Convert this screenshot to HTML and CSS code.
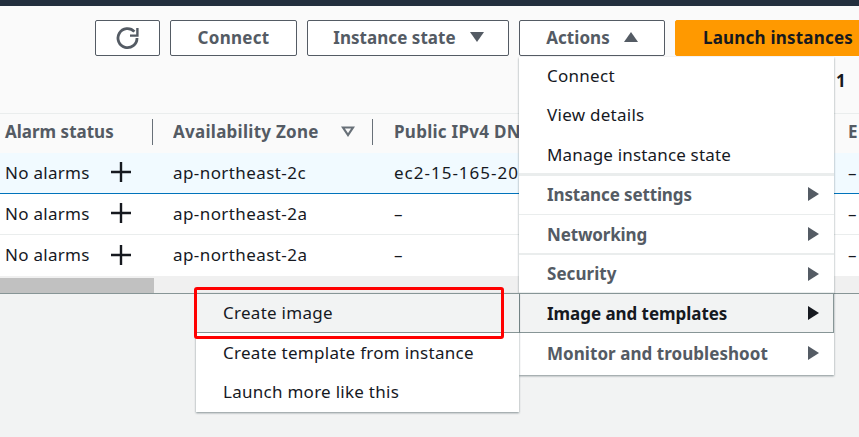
FILE: index.html
```html
<!DOCTYPE html>
<html>
<head>
    <meta charset="UTF-8">
    <title>Instances</title>
    <link rel="stylesheet" href="styles.css">
</head>
<body>
    <div class="topbar"></div>
    <div class="panel">
        <div class="toolbar">
            <button class="btn btn-refresh" aria-label="Refresh">
                <svg width="24" height="24" viewBox="0 0 24 24" fill="none" stroke="#545b64" stroke-width="2.8">
                    <path d="M18.4 5.6A9.5 9.5 0 1 0 21 12"/>
                    <path d="M21.4 2v7.6h-7.4" stroke-width="2.4"/>
                </svg>
            </button>
            <button class="btn btn-connect">Connect</button>
            <button class="btn btn-state">Instance state <span class="tri-down"></span></button>
            <button class="btn btn-actions">Actions <span class="tri-up"></span></button>
            <button class="btn btn-launch">Launch instances</button>
        </div>
        <div class="pager">1</div>
    </div>

    <div class="table">
        <div class="row row-head">
            <div class="cell cell-alarm">Alarm status<span class="sep sep-alarm"></span></div>
            <div class="cell">Availability Zone
                <svg class="sort" width="14" height="11" viewBox="0 0 14 11" fill="none" stroke="#687078" stroke-width="2.2"><path d="M2 1.5h10L7 9z"/></svg>
                <span class="sep sep-zone"></span>
            </div>
            <div class="cell">Public IPv4 DNS</div>
            <div class="cell">E</div>
        </div>
        <div class="row row-selected">
            <div class="cell">No alarms<svg class="plus" width="20" height="20" viewBox="0 0 20 20"><path d="M0 10h20M10 0v20" stroke="#16191f" stroke-width="2.4"/></svg></div>
            <div class="cell cell-zone">ap-northeast-2c</div>
            <div class="cell cell-dns">ec2-15-165-20</div>
            <div class="cell">–</div>
        </div>
        <div class="row">
            <div class="cell">No alarms<svg class="plus" width="20" height="20" viewBox="0 0 20 20"><path d="M0 10h20M10 0v20" stroke="#16191f" stroke-width="2.4"/></svg></div>
            <div class="cell cell-zone">ap-northeast-2a</div>
            <div class="cell">–</div>
            <div class="cell">–</div>
        </div>
        <div class="row row-last">
            <div class="cell">No alarms<svg class="plus" width="20" height="20" viewBox="0 0 20 20"><path d="M0 10h20M10 0v20" stroke="#16191f" stroke-width="2.4"/></svg></div>
            <div class="cell cell-zone">ap-northeast-2a</div>
            <div class="cell">–</div>
            <div class="cell">–</div>
        </div>
        <div class="scrollbar"><div class="thumb"></div></div>
    </div>
    <div class="footer"></div>

    <!-- menu Actions -->
    <ul class="menu menu-actions">
        <li class="item">Connect</li>
        <li class="item">View details</li>
        <li class="item item-end">Manage instance state</li>
        <li class="item group group-instance">Instance settings<span class="tri-right"></span></li>
        <li class="item group item-line">Networking<span class="tri-right"></span></li>
        <li class="item group group-security">Security<span class="tri-right"></span></li>
        <li class="item group active">Image and templates<span class="tri-right"></span></li>
        <li class="item group group-monitor">Monitor and troubleshoot<span class="tri-right"></span></li>
    </ul>

    <ul class="menu menu-sub">
        <li class="item hovered">Create image</li>
        <li class="item">Create template from instance</li>
        <li class="item item-launch">Launch more like this</li>
    </ul>

    <div class="redbox"></div>
</body>
</html>
```

FILE: styles.css
```css
* {
    box-sizing: border-box;
}

html, body {
    margin: 0;
    padding: 0;
}

body {
    width: 859px;
    height: 437px;
    overflow: hidden;
    position: relative;
    background-color: #f2f3f3;
    font-family: "Noto Sans", "Open Sans", sans-serif;
    font-size: 17px;
    letter-spacing: 0.27px;
    color: #16191f;
}

.topbar {
    height: 6px;
    background-color: #232f3e;
}

/* thanh nut */
.panel {
    height: 107px;
    background-color: #fafafa;
    overflow: hidden;
}

.toolbar {
    display: flex;
    gap: 10px;
    padding: 14px 0 0 95px;
    width: 1000px;
}

.btn {
    height: 36px;
    padding: 0 0 2px;
    border: 1px solid #545b64;
    border-radius: 2px;
    background-color: #fff;
    color: #545b64;
    font-family: inherit;
    font-size: 17px;
    letter-spacing: 0.27px;
    font-weight: 700;
    display: flex;
    align-items: center;
    justify-content: center;
    flex: none;
}

.btn-refresh { width: 65px; padding: 0; }
.btn-connect { width: 127px; }
.btn-state { width: 202px; letter-spacing: 0.05px; padding-left: 1px; }
.btn-actions { width: 146px; letter-spacing: 0.05px; }

.btn-launch {
    width: 200px;
    border-color: #ff9900;
    background-color: #ff9900;
    color: #16191f;
    justify-content: flex-start;
    padding-left: 27px;
    letter-spacing: 0.2px;
}

.tri-down, .tri-up {
    display: inline-block;
    width: 0;
    height: 0;
    margin-left: 14px;
    border-left: 7px solid transparent;
    border-right: 7px solid transparent;
}

.tri-down { border-top: 10px solid #545b64; }
.tri-up { border-bottom: 10px solid #545b64; }

.pager {
    text-align: right;
    padding: 13px 13px 0 0;
    font-weight: 700;
}

/* bang */
.table {
    background-color: #fff;
    overflow: hidden;
}

.row {
    display: grid;
    grid-template-columns: 173px 221px 454px 40px;
    height: 41px;
    align-items: center;
    border-bottom: 1px solid #eaeded;
}

.row-head {
    height: 40px;
    background-color: #fafafa;
    border-top: 1px solid #eaeded;
    border-bottom: none;
    color: #545b64;
    font-weight: 700;
}

.row-selected {
    background-color: #f1faff;
    border-bottom-color: #0073bb;
}

.row-last {
    border-bottom: none;
}

.cell {
    display: flex;
    align-items: center;
    white-space: nowrap;
    overflow: hidden;
    height: 100%;
    padding-bottom: 2px;
}

.row-head .cell {
    padding-bottom: 4px;
}

.cell:first-child {
    padding-left: 5px;
}

.cell-alarm {
    letter-spacing: 0;
}

.cell-zone {
    letter-spacing: 0.42px;
}

.cell-dns {
    letter-spacing: 1px;
}

.plus {
    margin-left: auto;
    margin-right: 42px;
    flex: none;
}

.sep {
    height: 26px;
    width: 1px;
    background-color: #687078;
    flex: none;
}

.sep-alarm {
    margin-left: auto;
    margin-right: 20px;
}

.sep-zone {
    margin-left: 17px;
    margin-right: 21px;
}

.sort {
    margin-left: auto;
    flex: none;
}

.scrollbar {
    height: 17px;
    padding-top: 2px;
    background-color: #f0f0f0;
}

.thumb {
    width: 154px;
    height: 15px;
    background-color: #c1c1c1;
}

.footer {
    height: 1px;
    background-color: #879596;
}

/* menu */
.menu {
    position: absolute;
    margin: 0;
    padding: 0;
    list-style: none;
    background-color: #fff;
    box-shadow: 0 1px 2px rgba(0, 28, 36, 0.45);
}

.menu-actions {
    left: 519px;
    top: 57px;
    width: 315px;
    height: 318px;
}

.menu-sub {
    left: 196px;
    top: 293px;
    width: 323px;
    height: 119px;
}

.item {
    height: 40px;
    padding: 0 27px 2px;
    display: flex;
    align-items: center;
    justify-content: space-between;
}

.menu-actions .item {
    padding-left: 28px;
}

.menu-actions .item:first-child {
    height: 39px;
}

.menu-actions .item:nth-child(2) {
    height: 39px;
}

.item-launch {
    height: 39px;
    padding-bottom: 3px;
}

.menu-actions .item-end {
    border-bottom: 3px solid #eaeded;
    height: 41px;
    letter-spacing: 0.17px;
    padding-bottom: 0;
}

.group {
    color: #545b64;
    font-weight: 700;
    letter-spacing: 0.05px;
    border-bottom: 1px solid #eaeded;
}

.menu-actions .group {
    padding-bottom: 0;
}

.menu-actions .group-instance {
    height: 39px;
    padding-bottom: 2px;
    letter-spacing: -0.13px;
}

.item-line {
    border-bottom-width: 2px;
    letter-spacing: -0.15px;
}

.group-security {
    height: 38px;
}

.menu-actions .group-monitor {
    height: 42px;
    padding-bottom: 2px;
    border-bottom: none;
}

.menu-actions .active {
    color: #16191f;
    background-color: #f2f3f3;
    border: 1px solid #879596;
    padding: 0 26px 0 27px;
    letter-spacing: -0.05px;
}

.hovered {
    background-color: #f2f3f3;
    border-top: 1px solid #879596;
    border-bottom: 1px solid #879596;
}

.tri-right {
    width: 0;
    height: 0;
    border-top: 7px solid transparent;
    border-bottom: 7px solid transparent;
    border-left: 11px solid #545b64;
    margin-right: -12px;
}

.active .tri-right {
    border-left-color: #16191f;
}

.redbox {
    position: absolute;
    left: 194px;
    top: 287px;
    width: 310px;
    height: 52px;
    border: 3px solid #f00;
    border-radius: 3px;
}
```
